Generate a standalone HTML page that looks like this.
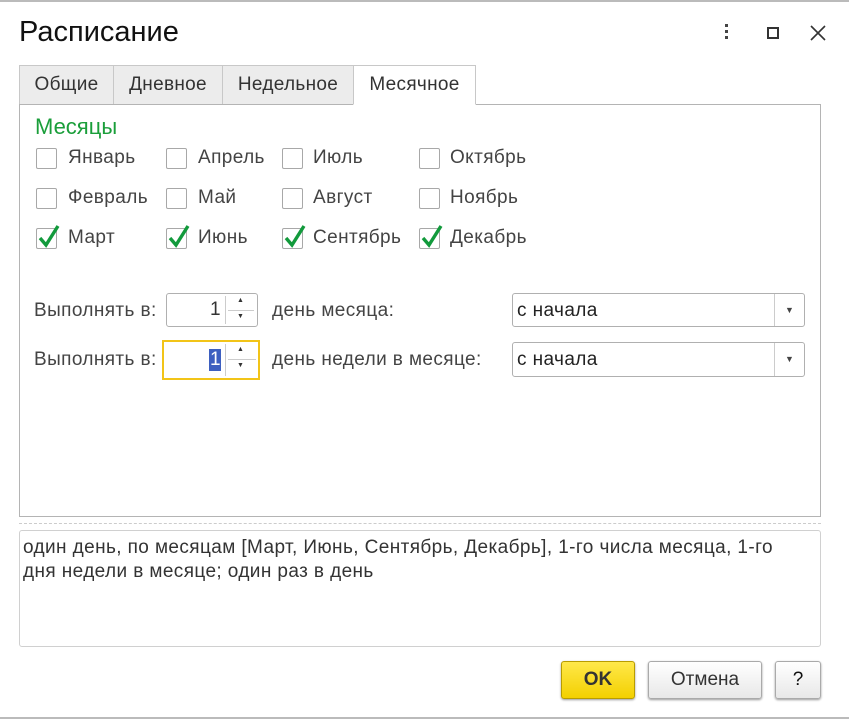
<!DOCTYPE html>
<html><head><meta charset="utf-8"><style>
*{box-sizing:border-box;margin:0;padding:0}
body{width:849px;height:720px;background:#fff;font-family:"Liberation Sans",sans-serif;color:#333;position:relative;overflow:hidden;font-size:17px}
.a{position:absolute}
.tab{position:absolute;top:65px;height:40px;border:1px solid #c8c8c8;background:#ececec;text-align:center;line-height:38px;font-size:19px;letter-spacing:0.3px;color:#333}
.cb{position:absolute;width:21px;height:21px;border:1px solid #a8a8a8;border-radius:2px;background:#fff}
.lb{position:absolute;font-size:19px;letter-spacing:0.4px;color:#444;line-height:20px}
.chk{position:absolute;left:0;top:-6px}
.btn{position:absolute;top:661px;height:38px;border:1px solid #aaa;border-radius:3px;background:linear-gradient(#fff,#e8e8e8);text-align:center;line-height:36px;font-size:19px;box-shadow:0 1px 2px #999}
</style></head><body>
<div class="a" style="left:0;top:0;width:849px;height:2px;background:#bbb"></div>
<div class="a" style="left:0;top:717px;width:849px;height:2px;background:#bbb"></div>
<div class="a" style="left:19px;top:16px;font-size:29px;color:#111">Расписание</div>
<div class="a" style="left:725px;top:24px;width:4px;height:18px">
<div style="width:3px;height:3px;background:#444;margin-bottom:3px"></div><div style="width:3px;height:3px;background:#444;margin-bottom:3px"></div><div style="width:3px;height:3px;background:#444"></div></div>
<div class="a" style="left:767px;top:27px;width:12px;height:12px;border:2px solid #333"></div>
<svg class="a" style="left:810px;top:25px" width="16" height="16"><path d="M1 1L15 15M15 1L1 15" stroke="#333" stroke-width="1.6"/></svg>
<div class="tab" style="left:19px;width:95px">Общие</div>
<div class="tab" style="left:113px;width:110px">Дневное</div>
<div class="tab" style="left:222px;width:132px">Недельное</div>
<div class="a" style="left:19px;top:104px;width:802px;height:413px;border:1px solid #b4b4b4"></div>
<div class="tab" style="left:353px;width:123px;background:#fff;border-bottom-color:#fff">Месячное</div>
<div class="a" style="left:35px;top:114px;font-size:22px;color:#1a9e3a">Месяцы</div>
<div class="cb" style="left:36px;top:148px"></div><div class="lb" style="left:68px;top:148px">Январь</div>
<div class="cb" style="left:166px;top:148px"></div><div class="lb" style="left:198px;top:148px">Апрель</div>
<div class="cb" style="left:282px;top:148px"></div><div class="lb" style="left:313px;top:148px">Июль</div>
<div class="cb" style="left:419px;top:148px"></div><div class="lb" style="left:450px;top:148px">Октябрь</div>
<div class="cb" style="left:36px;top:188px"></div><div class="lb" style="left:68px;top:188px">Февраль</div>
<div class="cb" style="left:166px;top:188px"></div><div class="lb" style="left:198px;top:188px">Май</div>
<div class="cb" style="left:282px;top:188px"></div><div class="lb" style="left:313px;top:188px">Август</div>
<div class="cb" style="left:419px;top:188px"></div><div class="lb" style="left:450px;top:188px">Ноябрь</div>
<div class="cb" style="left:36px;top:228px"><svg class="chk" width="24" height="26"><path d="M3 15L9 22L21 3" fill="none" stroke="#129a3c" stroke-width="3.4"/></svg></div><div class="lb" style="left:68px;top:228px">Март</div>
<div class="cb" style="left:166px;top:228px"><svg class="chk" width="24" height="26"><path d="M3 15L9 22L21 3" fill="none" stroke="#129a3c" stroke-width="3.4"/></svg></div><div class="lb" style="left:198px;top:228px">Июнь</div>
<div class="cb" style="left:282px;top:228px"><svg class="chk" width="24" height="26"><path d="M3 15L9 22L21 3" fill="none" stroke="#129a3c" stroke-width="3.4"/></svg></div><div class="lb" style="left:313px;top:228px">Сентябрь</div>
<div class="cb" style="left:419px;top:228px"><svg class="chk" width="24" height="26"><path d="M3 15L9 22L21 3" fill="none" stroke="#129a3c" stroke-width="3.4"/></svg></div><div class="lb" style="left:450px;top:228px">Декабрь</div>

<div class="lb" style="left:34px;top:301px">Выполнять в:</div>
<div class="a" style="left:166px;top:293px;width:92px;height:34px;border:1px solid #b0b0b0;border-radius:3px"></div>
<div class="a" style="left:210px;top:299px;font-size:19px">1</div>
<div class="a" style="left:225px;top:296px;width:1px;height:28px;background:#ccc"></div>
<div class="a" style="left:228px;top:310px;width:26px;height:1px;background:#ccc"></div>
<div class="a" style="left:237px;top:297px;font-size:7px">▲</div><div class="a" style="left:237px;top:313px;font-size:7px">▼</div>
<div class="lb" style="left:272px;top:301px">день месяца:</div>
<div class="a" style="left:512px;top:293px;width:293px;height:34px;border:1px solid #b0b0b0;border-radius:3px"></div>
<div class="lb" style="left:517px;top:301px;color:#222">с начала</div>
<div class="a" style="left:774px;top:294px;width:1px;height:32px;background:#ccc"></div>
<div class="a" style="left:785px;top:305px;font-size:9px;color:#444">▼</div>

<div class="lb" style="left:34px;top:350px">Выполнять в:</div>
<div class="a" style="left:162px;top:340px;width:98px;height:40px;border:2px solid #f2c418"></div>
<div class="a" style="left:209px;top:349px;width:12px;height:22px;background:#3d5fc0"></div>
<div class="a" style="left:210px;top:349px;font-size:19px;color:#fff">1</div>
<div class="a" style="left:225px;top:344px;width:1px;height:32px;background:#ccc"></div>
<div class="a" style="left:228px;top:359px;width:28px;height:1px;background:#ccc"></div>
<div class="a" style="left:237px;top:346px;font-size:7px">▲</div><div class="a" style="left:237px;top:362px;font-size:7px">▼</div>
<div class="lb" style="left:272px;top:350px">день недели в месяце:</div>
<div class="a" style="left:512px;top:342px;width:293px;height:35px;border:1px solid #b0b0b0;border-radius:3px"></div>
<div class="lb" style="left:517px;top:350px;color:#222">с начала</div>
<div class="a" style="left:774px;top:343px;width:1px;height:33px;background:#ccc"></div>
<div class="a" style="left:785px;top:354px;font-size:9px;color:#444">▼</div>

<div class="a" style="left:19px;top:523px;width:802px;border-top:1px dashed #ccc"></div>
<div class="a" style="left:19px;top:530px;width:802px;height:117px;border:1px solid #d0d0d0;border-radius:3px"></div>
<div class="a" style="left:23px;top:536px;width:780px;font-size:19px;letter-spacing:0.4px;line-height:24px;color:#333">один день, по месяцам [Март, Июнь, Сентябрь, Декабрь], 1-го числа месяца, 1-го дня недели в месяце; один раз в день</div>

<div class="btn" style="left:561px;width:74px;background:linear-gradient(#ffe84a,#f3d000);border-color:#b89c00;font-weight:bold;color:#333">OK</div>
<div class="btn" style="left:648px;width:114px">Отмена</div>
<div class="btn" style="left:775px;width:46px;color:#111">?</div>
</body></html>
